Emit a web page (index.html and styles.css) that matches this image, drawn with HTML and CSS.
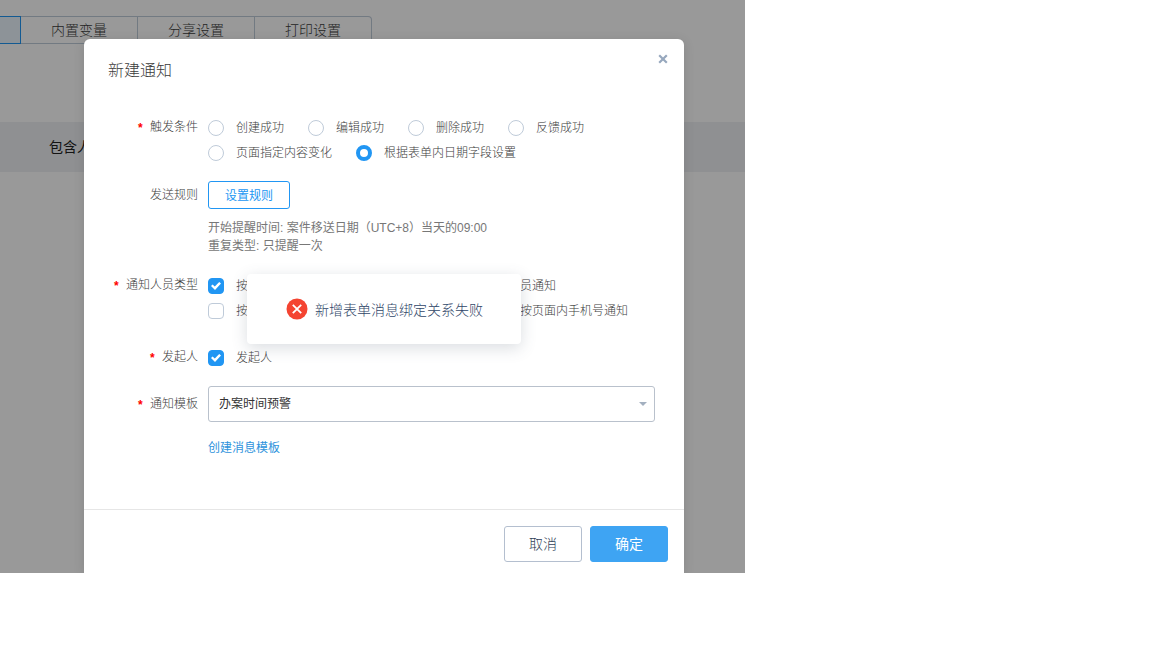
FILE: index.html
```html
<!DOCTYPE html>
<html lang="zh-CN">
  <head>
    <meta charset="UTF-8" />
    <meta name="viewport" content="width=device-width, initial-scale=1.0" />
    <title>新建通知</title>
    <link rel="stylesheet" href="styles.css">
  </head>
  <body>
    <div class="app">
      <div class="page">
        <nav class="tabs">
          <button type="button" class="tab active" aria-label="通知"></button>
          <button type="button" class="tab">内置变量</button>
          <button type="button" class="tab">分享设置</button>
          <button type="button" class="tab">打印设置</button>
        </nav>
        <div class="table-head">包含人员</div>
      </div>

      <div class="overlay">
        <form class="modal">
          <header class="modal-header">
            <h2>新建通知</h2>
            <button type="button" class="close" aria-label="关闭">
              <svg width="10" height="10" viewBox="0 0 10 10">
                <path d="M1.2 1.2 L8.8 8.8 M8.8 1.2 L1.2 8.8" />
              </svg>
            </button>
          </header>

          <div class="modal-body">
            <div class="row" role="radiogroup" aria-labelledby="trigger-label">
              <span class="row-label required" id="trigger-label">触发条件</span>
              <div class="options">
                <label><input type="radio" name="trigger" />创建成功</label>
                <label><input type="radio" name="trigger" />编辑成功</label>
                <label><input type="radio" name="trigger" />删除成功</label>
                <label><input type="radio" name="trigger" />反馈成功</label>
                <label><input type="radio" name="trigger" />页面指定内容变化</label>
                <label><input type="radio" name="trigger" checked />根据表单内日期字段设置</label>
              </div>
            </div>

            <div class="row">
              <label class="row-label rule-label" for="rule">发送规则</label>
              <div>
                <button type="button" class="rule-button" id="rule">设置规则</button>
                <div class="rule-info">
                  <div>开始提醒时间: 案件移送日期（UTC+8）当天的09:00</div>
                  <div>重复类型: 只提醒一次</div>
                </div>
              </div>
            </div>

            <div class="row row-loose" role="group" aria-labelledby="type-label">
              <span class="row-label required" id="type-label">通知人员类型</span>
              <div class="options">
                <label><input type="checkbox" checked />按人员通知</label>
                <label><input type="checkbox" />按角色通知</label>
                <label><input type="checkbox" />按表单内人员通知</label>
                <label><input type="checkbox" />按页面邮箱</label>
                <label><input type="checkbox" />按页面内电子邮箱通知</label>
                <label><input type="checkbox" />按页面内手机号通知</label>
              </div>
            </div>

            <div class="row" role="group" aria-labelledby="sender-label">
              <span class="row-label required" id="sender-label">发起人</span>
              <div class="options">
                <label><input type="checkbox" checked />发起人</label>
              </div>
            </div>

            <div class="row">
              <label class="row-label select-label required" for="template">通知模板</label>
              <div>
                <div class="select-box">
                  <select id="template">
                    <option>办案时间预警</option>
                  </select>
                </div>
                <a class="create-link" href="#">创建消息模板</a>
              </div>
            </div>
          </div>

          <footer class="modal-footer">
            <button type="button" class="button">取消</button>
            <button type="submit" class="button primary">确定</button>
          </footer>

          <div class="toast" role="alert">
            <svg width="22" height="22" viewBox="0 0 22 22">
              <circle cx="11" cy="11" r="10.5" fill="#f44431" />
              <path d="M6.8 6.8 L15.2 15.2 M15.2 6.8 L6.8 15.2" />
            </svg>
            <span>新增表单消息绑定关系失败</span>
          </div>
        </form>
      </div>
    </div>
  </body>
</html>
```

FILE: styles.css
```css
* {
  box-sizing: border-box;
}

body {
  margin: 0;
  background: #fff;
  color: #3c3c3c;
  font-family: "Liberation Sans", "Noto Sans CJK SC", sans-serif;
  font-size: 12px;
  font-weight: 300;
}

button,
input,
select {
  margin: 0;
  font: inherit;
}

button {
  padding: 0 0 2px;
  cursor: pointer;
}

/* page and overlay share one grid cell */
.app {
  display: grid;
  max-width: 745px;
  overflow: hidden;
}

.page,
.overlay {
  grid-area: 1 / 1;
  min-width: 0;
}

.page {
  padding-top: 16px;
}

.tabs {
  display: flex;
  margin-bottom: 78px;
}

.tab {
  width: 117px;
  height: 28px;
  border: 1px solid #bfcbd9;
  border-left: none;
  background: #fff;
  color: #3c3c3c;
  font-size: 14px;
}

.tab.active {
  width: 21px;
  border-color: #2196f3;
  background: #ecf6fd;
}

.tab:last-child {
  border-radius: 0 4px 4px 0;
}

.table-head {
  height: 50px;
  padding-left: 49px;
  background: #eef0f3;
  color: #222;
  font-size: 14px;
  font-weight: 400;
  line-height: 50px;
}

.overlay {
  position: relative;
  padding: 39px 61px 0 84px;
  background: rgba(0, 0, 0, 0.4);
}

.modal {
  position: relative;
  border-radius: 6px 6px 0 0;
  background: #fff;
  box-shadow: 0 2px 12px rgba(0, 0, 0, 0.12);
}

.modal-header {
  display: flex;
  justify-content: space-between;
  align-items: flex-start;
  padding: 12px 12px 20px 24px;
}

.modal-header h2 {
  margin: 8px 0 0;
  font-size: 16px;
  font-weight: 300;
  line-height: 24px;
}

.close {
  display: flex;
  padding: 3px 4px;
  border: none;
  background: none;
}

.close path {
  fill: none;
  stroke: #97a8be;
  stroke-width: 2.2;
}

.modal-body {
  padding: 12px 29px 52px 24px;
}

.row {
  display: grid;
  grid-template-columns: 100px 1fr;
  margin-bottom: 16px;
}

.row-loose {
  margin-bottom: 22px;
}

.row:last-child {
  margin-bottom: 0;
}

.row-label {
  padding-right: 10px;
  line-height: 24px;
  text-align: right;
}

.rule-label {
  line-height: 28px;
}

.select-label {
  line-height: 36px;
}

.required::before {
  content: "*";
  margin-right: 6px;
  color: #f00;
  font-family: "Liberation Mono", monospace;
  font-weight: 700;
  line-height: 1;
  vertical-align: -1px;
}

.options {
  display: flex;
  flex-wrap: wrap;
  column-gap: 24px;
}

.options label {
  display: flex;
  gap: 12px;
  height: 25px;
  line-height: 26px;
}

.options input {
  display: grid;
  place-items: center;
  width: 16px;
  height: 16px;
  margin-top: 5px;
  border: 1px solid #bfcbd9;
  background: #fff;
  appearance: none;
}

.options input[type="radio"] {
  border-radius: 50%;
}

.options input[type="radio"]:checked {
  border: 4px solid #2196f3;
}

.options input[type="checkbox"] {
  border-radius: 4px;
}

.options input[type="checkbox"]:checked {
  border-color: #2196f3;
  background: #2196f3;
}

.options input[type="checkbox"]:checked::before {
  content: "";
  width: 10px;
  height: 8px;
  background: #fff;
  clip-path: polygon(0 50%, 16% 30%, 38% 55%, 82% 0, 100% 18%, 40% 100%);
}

.rule-button {
  display: block;
  width: 82px;
  height: 28px;
  border: 1px solid #2196f3;
  border-radius: 3px;
  background: #fff;
  color: #2196f3;
  font-weight: 400;
}

.rule-info {
  padding: 10px 0 2px;
  color: #777;
  font-weight: 400;
  line-height: 18px;
}

.select-box {
  position: relative;
}

.select-box::after {
  content: "";
  position: absolute;
  top: 16px;
  right: 8px;
  border: 4px solid transparent;
  border-top-color: #a3b0c0;
  border-bottom: none;
  pointer-events: none;
}

.select-box select {
  width: 100%;
  height: 36px;
  padding: 0 24px 0 10px;
  border: 1px solid #b9c1cc;
  border-radius: 3px;
  background: #fff;
  color: #333;
  font-weight: 400;
  appearance: none;
}

.create-link {
  display: inline-block;
  margin-top: 17px;
  color: #2e93dc;
  font-weight: 400;
  line-height: 18px;
  text-decoration: none;
}

.modal-footer {
  display: flex;
  justify-content: flex-end;
  gap: 8px;
  padding: 16px 16px 11px;
  border-top: 1px solid #e6e6e6;
}

.button {
  width: 78px;
  height: 36px;
  border: 1px solid #b4bfcf;
  border-radius: 3px;
  background: #fff;
  color: #2f3f58;
  font-size: 14px;
}

.button.primary {
  border-color: #3ea4f3;
  background: #3ea4f3;
  color: #fff;
  font-weight: 400;
}

.toast {
  position: absolute;
  top: 235px;
  left: 50%;
  display: flex;
  align-items: center;
  gap: 7px;
  height: 70px;
  padding: 0 38px 0 39px;
  border-radius: 4px;
  background: #fff;
  box-shadow: 0 4px 16px rgba(71, 86, 105, 0.2);
  color: #2f4668;
  font-size: 14px;
  white-space: nowrap;
  transform: translateX(-50%);
}

.toast path {
  fill: none;
  stroke: #fff;
  stroke-width: 1.8;
}
```
